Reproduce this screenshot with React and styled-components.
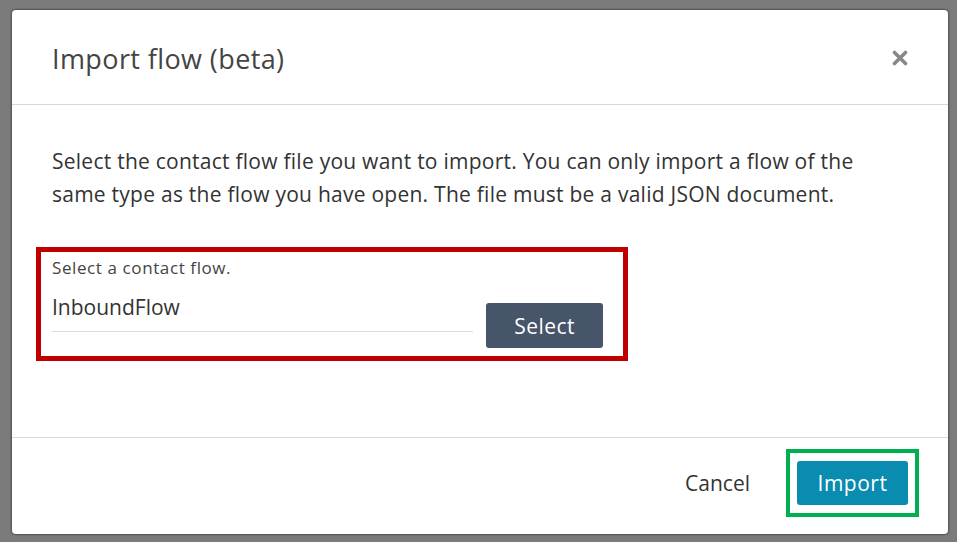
import React from 'react';
import styled, { createGlobalStyle } from 'styled-components';

const GlobalStyle = createGlobalStyle`
  html, body {
    margin: 0;
    padding: 0;
    height: 100%;
  }
  body {
    background: #7b7b7b;
    font-family: "Open Sans", "Liberation Sans", sans-serif;
  }
  #root {
    height: 100%;
  }
`;

const Backdrop = styled.div`
  box-sizing: border-box;
  height: 542px;
  padding: 10px 9px 8px 12px;
  display: flex;
`;

const Modal = styled.div`
  flex: 1;
  display: flex;
  flex-direction: column;
  background: #fff;
  border-radius: 4px;
  box-shadow: 0 0 2px 1px rgba(0, 0, 0, 0.35);
`;

const Header = styled.div`
  height: 95px;
  display: flex;
  align-items: center;
  justify-content: space-between;
  padding: 2px 40px 0 40px;
  box-sizing: border-box;
  border-bottom: 1px solid #d9d9d9;
`;

const Title = styled.h1`
  margin: 0;
  font-size: 27px;
  letter-spacing: 0.4px;
  font-weight: 400;
  color: #444;
`;

const CloseButton = styled.button`
  border: 0;
  background: none;
  padding: 0;
  width: 16px;
  height: 16px;
  cursor: pointer;
  display: flex;
`;

const Body = styled.div`
  flex: 1;
  padding: 40px 40px 0 40px;
`;

const Intro = styled.p`
  margin: 0;
  font-size: 21px;
  letter-spacing: 0.25px;
  line-height: 33px;
  color: #333;
  white-space: nowrap;
`;

const Highlight = styled.div`
  margin: 36px 0 0 -16px;
  width: 592px;
  box-sizing: border-box;
  border: 5px solid ${p => p.color};
  padding: 6px 20px 8px 11px;
`;

const FieldLabel = styled.div`
  font-size: 17px;
  letter-spacing: 0.6px;
  line-height: 20px;
  color: #444;
`;

const FieldRow = styled.div`
  display: flex;
  align-items: flex-start;
  gap: 13px;
  margin-top: 15px;
`;

const FileInput = styled.div`
  width: 422px;
  font-size: 21px;
  line-height: 28px;
  color: #333;
  padding-bottom: 10px;
  border-bottom: 1px solid #dcdcdc;
`;

const Button = styled.button`
  margin-top: ${p => p.offset || 0}px;
  width: ${p => p.w}px;
  height: ${p => p.h}px;
  border: 0;
  border-radius: 3px;
  background: ${p => p.bg};
  color: #fff;
  font-family: inherit;
  font-size: 21px;
  letter-spacing: 0.5px;
  cursor: pointer;
`;

const Footer = styled.div`
  height: 97px;
  border-top: 1px solid #d9d9d9;
  display: flex;
  align-items: center;
  justify-content: flex-end;
  gap: 36px;
  padding: 0 29px 6px 0;
  box-sizing: border-box;
`;

const LinkButton = styled.button`
  border: 0;
  background: none;
  padding: 0;
  font-family: inherit;
  font-size: 21px;
  color: #333;
  cursor: pointer;
`;

const Outline = styled.div`
  border: 4px solid ${p => p.color};
  padding: 8px 7px;
  display: flex;
`;

const CloseIcon = () => (
  <svg width="16" height="16" viewBox="0 0 16 16">
    <path d="M2.5 2.5 L13.5 13.5 M13.5 2.5 L2.5 13.5" stroke="#888" strokeWidth="3.6" strokeLinecap="round" />
  </svg>
);

export default function App() {
  return (
    <>
      <GlobalStyle />
      <Backdrop>
        <Modal>
          <Header>
            <Title>Import flow (beta)</Title>
            <CloseButton aria-label="Close">
              <CloseIcon />
            </CloseButton>
          </Header>
          <Body>
            <Intro>
              Select the contact flow file you want to import. You can only import a flow of the
              <br />
              same type as the flow you have open. The file must be a valid JSON document.
            </Intro>
            <Highlight color="#c00000">
              <FieldLabel>Select a contact flow.</FieldLabel>
              <FieldRow>
                <FileInput>InboundFlow</FileInput>
                <Button offset={10} w={117} h={45} bg="#465569">Select</Button>
              </FieldRow>
            </Highlight>
          </Body>
          <Footer>
            <LinkButton>Cancel</LinkButton>
            <Outline color="#00b050">
              <Button w={111} h={44} bg="#0a8bb0">Import</Button>
            </Outline>
          </Footer>
        </Modal>
      </Backdrop>
    </>
  );
}
